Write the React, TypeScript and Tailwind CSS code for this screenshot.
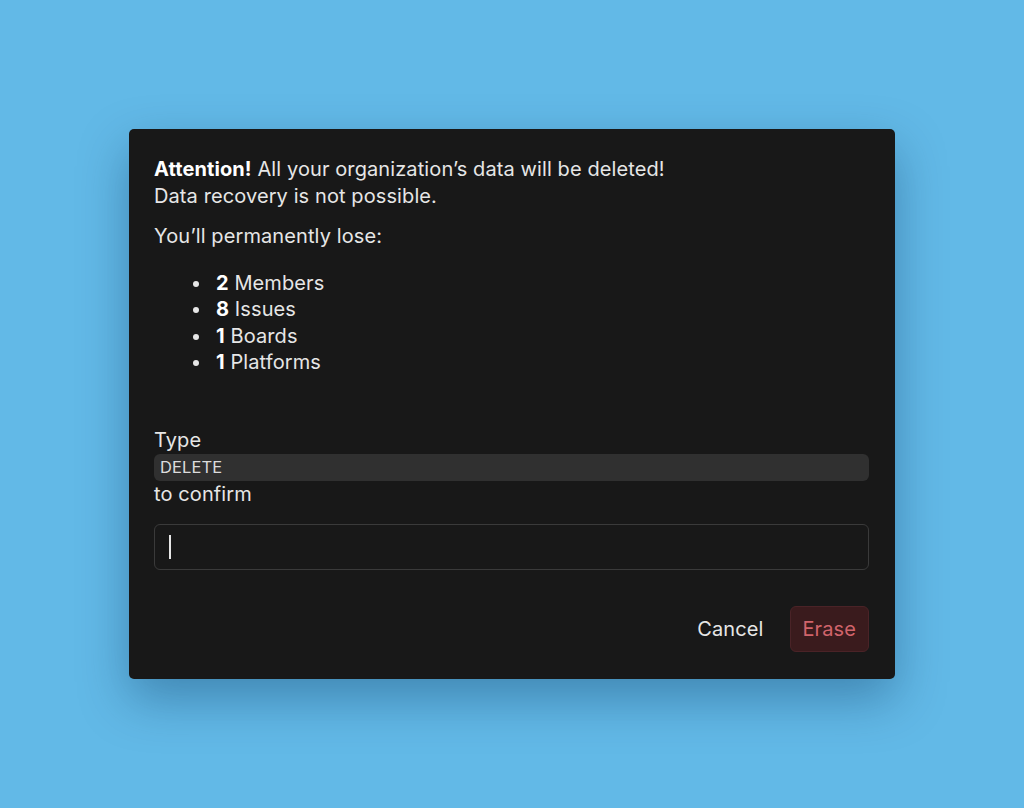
export default function App() {
  return (
    <div className="w-[1024px] h-[808px] bg-[#62b9e7] flex items-start justify-center pt-[129px]" style={{ fontFamily: "Inter, 'Noto Sans', sans-serif" }}>
      <div className="w-[766px] h-[550px] bg-[#181818] rounded-[5px] shadow-[0_20px_50px_rgba(0,40,80,0.35)] pl-[25px] pr-[26px] pt-[27px] flex flex-col text-[#e6e6e6] text-[20px] leading-[27px] tracking-[0.1px]">
        <p><span className="font-bold text-white">Attention!</span> All your organization’s data will be deleted!</p>
        <p>Data recovery is not possible.</p>
        <p className="mt-[13px]">You’ll permanently lose:</p>
        <ul className="mt-[20px] pl-[58px] list-disc leading-[26.3px]">
          <li className="pl-[4px]"><span className="font-bold text-white">2</span> Members</li>
          <li className="pl-[4px]"><span className="font-bold text-white">8</span> Issues</li>
          <li className="pl-[4px]"><span className="font-bold text-white">1</span> Boards</li>
          <li className="pl-[4px]"><span className="font-bold text-white">1</span> Platforms</li>
        </ul>
        <div className="mt-[52px]">
          <div>Type</div>
          <div className="h-[27px] bg-[#303030] rounded-[6px] px-[6px] text-[16.5px] leading-[27px] text-[#dcdcdc]">DELETE</div>
          <div>to confirm</div>
        </div>
        <div className="mt-[16px] h-[46px] border border-[#3a3a3a] rounded-[6px] flex items-center px-[14px]">
          <div className="w-[2px] h-[24px] bg-[#e6e6e6]" />
        </div>
        <div className="mt-[36px] flex justify-end items-center gap-[26px]">
          <button className="text-[#e6e6e6] text-[20px]">Cancel</button>
          <button className="h-[46px] px-[12px] rounded-[6px] bg-[#3a1b1d] border border-[#4a2327] text-[#d1646b] text-[20px]">Erase</button>
        </div>
      </div>
    </div>
  );
}
